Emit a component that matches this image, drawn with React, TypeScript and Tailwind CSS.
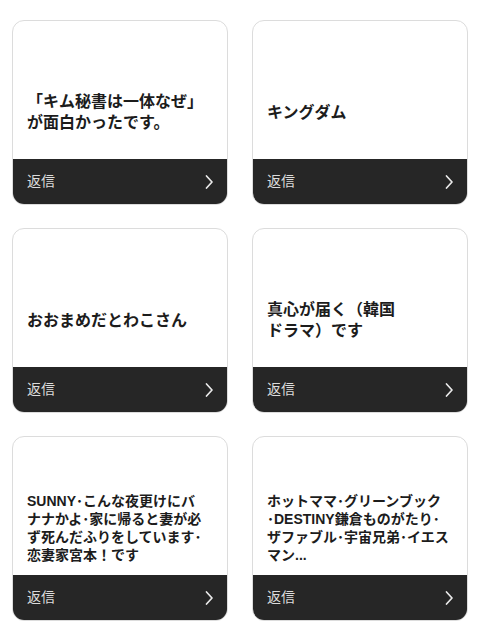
import React from "react";

type Card = { lines: string[]; size: "lg" | "sm" };

const cards: Card[] = [
  { lines: ["「キム秘書は一体なぜ」", "が面白かったです。"], size: "lg" },
  { lines: ["キングダム"], size: "lg" },
  { lines: ["おおまめだとわこさん"], size: "lg" },
  { lines: ["真心が届く（韓国", "ドラマ）です"], size: "lg" },
  {
    lines: [
      "SUNNY･こんな夜更けにバ",
      "ナナかよ･家に帰ると妻が必",
      "ず死んだふりをしています･",
      "恋妻家宮本！です",
    ],
    size: "sm",
  },
  {
    lines: [
      "ホットママ･グリーンブック",
      "･DESTINY鎌倉ものがたり･",
      "ザファブル･宇宙兄弟･イエス",
      "マン...",
    ],
    size: "sm",
  },
];

function Chevron() {
  return (
    <svg width="10" height="16" viewBox="0 0 10 16" fill="none">
      <path
        d="M2.5 2 L8 8 L2.5 14"
        stroke="#e8e8e8"
        strokeWidth="1.7"
        strokeLinecap="round"
        strokeLinejoin="round"
      />
    </svg>
  );
}

function ReplyCard({ card }: { card: Card }) {
  return (
    <div className="flex h-[185px] flex-col overflow-hidden rounded-[12px] border border-[#dcdcdc] bg-white">
      <div className="flex flex-1 items-center px-[14px] pt-[44px]">
        <p
          className={
            card.size === "lg"
              ? "whitespace-nowrap text-[16px] font-bold leading-[21px] text-[#1c1c1c]"
              : "whitespace-nowrap text-[14px] font-bold leading-[18px] text-[#1c1c1c]"
          }
        >
          {card.lines.map((l, i) => (
            <React.Fragment key={i}>
              {i > 0 && <br />}
              {l}
            </React.Fragment>
          ))}
        </p>
      </div>
      <div className="flex h-[45px] items-center justify-between bg-[#262626] pl-[14px] pr-[13px]">
        <span className="text-[14px] font-normal text-[#dcdcdc]">返信</span>
        <Chevron />
      </div>
    </div>
  );
}

export default function App() {
  return (
    <div
      className="min-h-[640px] w-[480px] bg-white px-[12px] pt-[20px]"
      style={{ fontFamily: '"Liberation Sans", "Noto Sans CJK JP", sans-serif' }}
    >
      <div className="grid grid-cols-2 gap-x-[24px] gap-y-[23px]">
        {cards.map((c, i) => (
          <ReplyCard key={i} card={c} />
        ))}
      </div>
    </div>
  );
}
